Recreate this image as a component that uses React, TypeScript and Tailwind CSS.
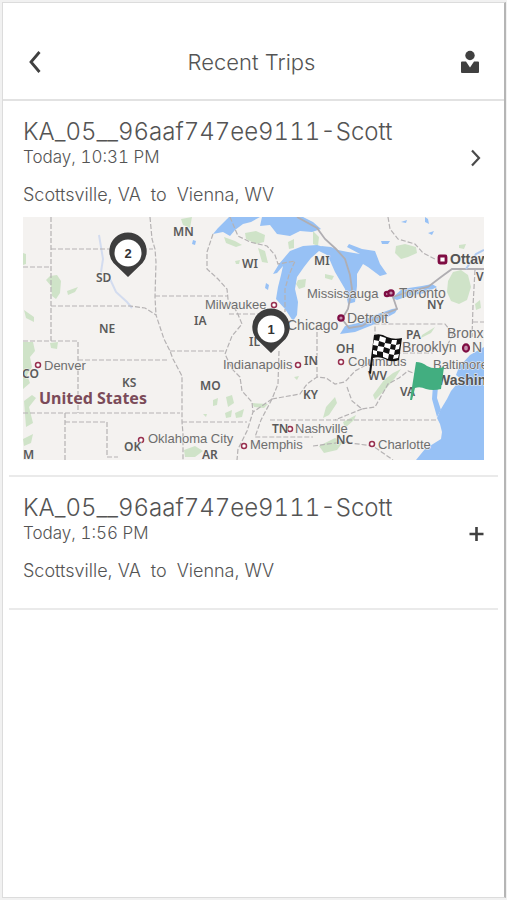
import { useState } from 'react';

type Trip = {
  id: number;
  name: string;
  time: string;
  from: string;
  to: string;
};

const trips: Trip[] = [
  { id: 1, name: 'KA_05__96aaf747ee9111-Scott', time: 'Today, 10:31 PM', from: 'Scottsville, VA', to: 'Vienna, WV' },
  { id: 2, name: 'KA_05__96aaf747ee9111-Scott', time: 'Today, 1:56 PM', from: 'Scottsville, VA', to: 'Vienna, WV' },
];

const stateLabels = [
  { text: 'MN', x: 150, y: 19 },
  { text: 'SD', x: 73, y: 65 },
  { text: 'WI', x: 219, y: 51 },
  { text: 'MI', x: 291, y: 48 },
  { text: 'NE', x: 76, y: 116 },
  { text: 'IA', x: 171, y: 108 },
  { text: 'IL', x: 226, y: 129 },
  { text: 'IN', x: 281, y: 148 },
  { text: 'OH', x: 313, y: 136 },
  { text: 'PA', x: 383, y: 122 },
  { text: 'NY', x: 404, y: 92 },
  { text: 'V', x: 453, y: 64 },
  { text: 'CO', x: -1, y: 161 },
  { text: 'KS', x: 99, y: 170 },
  { text: 'MO', x: 177, y: 173 },
  { text: 'KY', x: 280, y: 182 },
  { text: 'WV', x: 345, y: 163 },
  { text: 'VA', x: 377, y: 179 },
  { text: 'OK', x: 101, y: 234 },
  { text: 'AR', x: 179, y: 242 },
  { text: 'TN', x: 249, y: 216 },
  { text: 'NC', x: 313, y: 227 },
  { text: 'M', x: 0, y: 242 },
];

const cityLabels = [
  { text: 'Milwaukee', x: 182, y: 92, size: 13 },
  { text: 'Mississauga', x: 284, y: 81, size: 13 },
  { text: 'Toronto', x: 376, y: 81, size: 14 },
  { text: 'Chicago', x: 264, y: 113, size: 14 },
  { text: 'Detroit', x: 324, y: 106, size: 14 },
  { text: 'Brooklyn', x: 379, y: 135, size: 14 },
  { text: 'Bronx', x: 424, y: 121, size: 14 },
  { text: 'N', x: 449, y: 135, size: 14 },
  { text: 'Denver', x: 21, y: 153, size: 13 },
  { text: 'Indianapolis', x: 200, y: 152, size: 13 },
  { text: 'Columbus', x: 325, y: 149, size: 13 },
  { text: 'Baltimore', x: 410, y: 152, size: 13 },
  { text: 'Oklahoma City', x: 125, y: 226, size: 13 },
  { text: 'Memphis', x: 227, y: 232, size: 13 },
  { text: 'Nashville', x: 272, y: 216, size: 13 },
  { text: 'Charlotte', x: 355, y: 232, size: 13 },
];

const cityDots = [
  [251, 88],
  [15, 148],
  [275, 148],
  [318, 145],
  [118, 223],
  [221, 229],
  [267, 212],
  [349, 227],
];

const borders = [
  'M28 0V124 M0 124H55V196 M55 143H146 M0 50H28 M28 32H130',
  'M28 89H107L122 91L133 98L141 122L147 134L150 142L159 159V205L160 217V243',
  'M127 0L129 22L132 32L133 45L132 80L133 98 M132 79H204 M206 97H237',
  'M190 17L184 35L184 52L195 62L204 72L205 82L214 95L219 107L209 119L202 137L209 152L217 160L219 174L229 185L230 195L224 214L215 232L214 243',
  'M207 0L215 19L227 25L244 29L252 38L255 47L272 44L266 58L262 72V95',
  'M147 134H202 M0 196H157 M159 205H224 M247 203H414 M42 196V243 M42 205H84V240H95',
  'M256 134L255 167L249 182L230 195 M249 182L260 180L277 177L284 167L294 160L303 161L312 167L322 165L332 154L345 147L352 136V107H422L430 117L424 129',
  'M294 108V160 M324 170L329 184L339 192L352 190L365 167L376 161L385 154L400 160L412 172 M339 192L312 203 M249 182L238 203L232 220H290',
  'M365 0L367 12L375 22L392 27L400 36L412 42 M452 53L450 89L449 120 M450 105H461 M290 229L320 225L350 229L370 243 M352 136H410',
];

const lakes = [
  'M206 0L195 11L190 17L200 15L207 19L212 13L220 7L228 5L237 0Z',
  'M239 0L237 9L247 8L254 17L267 19L277 14L289 15L298 12L290 5L280 0Z',
  'M250 57L256 47L267 34L280 29L294 28L304 31L312 37L306 39L296 34L288 41L281 50L274 60L272 72L275 85L274 98L270 104L262 92L253 82L255 70L258 58L260 49L254 56Z',
  'M298 29L308 30L315 33L325 35L337 37L324 30L326 27L339 32L352 34L357 47L364 57L357 59L345 50L340 47L334 57V69L332 85L325 87L322 72L312 55L305 39Z',
  'M322 109L335 106L352 98L369 92L375 91L372 96L352 107L332 115L317 117Z',
  'M369 81L379 72L399 69L409 67L414 70L402 76L385 79L374 83Z',
  'M461 130L447 138L436 150L433 158L438 162L428 174L424 182L418 192L414 201L417 207L419 215L418 222L402 232L393 243H461Z',
  'M410 168L409 182L414 200L418 193L414 181L415 170Z',
  'M243 66L246 68L245 73L242 71Z M170 23L173 24L172 28L169 27Z M358 24L367 24L365 27L359 27Z M402 0L405 2L406 7L402 5Z M378 5L384 3L383 6Z M405 16L411 14L409 18Z',
];

const woods = [
  'M27 59L34 58L38 64L37 76L33 82L29 79L28 69L23 63Z',
  'M430 55L438 53L445 58L448 70L444 83L436 87L428 84L424 75L425 64Z',
  'M373 29L382 27L393 30L394 36L385 40L378 42L372 36Z',
  'M222 16L233 14L242 18L241 25L233 27L223 22Z',
  'M235 31L242 34L245 46L239 45Z M212 44L217 43L216 47L213 47Z',
  'M201 20L212 24L219 28L213 30L203 26Z M158 2L169 0L167 11L160 8Z',
  'M290 14L296 20L295 29L290 27Z M265 25L271 22L271 31L266 32Z',
  'M275 63L283 62L282 70L276 72L273 67Z M302 57L311 59L309 63L302 61Z',
  'M0 125H10L12 134L7 140L9 150L4 158L7 166L0 172Z M27 126L35 125L34 132L28 131Z',
  'M0 36L3 37V47L0 48Z M1 93L11 100V105L3 101Z M44 74L55 70L52 75L45 78Z',
  'M1 184L9 178L13 181L6 190L10 206L3 210Z M0 222L10 217L8 226L1 229Z',
  'M203 180L209 178L211 186L205 190Z M190 183L195 181L194 188L190 189Z M202 196L209 193L208 200L203 201Z M212 196L221 192L219 200L213 201Z M180 197L184 197L183 200Z',
  'M161 233L172 229L180 234L172 240L162 240Z M229 186L245 187L241 191L231 190Z',
  'M361 163L370 156L378 152L372 161L362 173L352 183L350 178Z',
  'M303 190L312 180L314 186L306 198L300 201Z M296 229L312 221L320 225L314 233L301 236Z M320 205L333 198L331 203L322 211Z',
  'M399 118L412 110L408 116L398 121Z M436 28L443 27L441 32L436 31Z M452 87L457 83L458 91L453 93Z M271 160L276 159L274 163Z',
];

const BackIcon = () => (
  <svg viewBox="0 0 16 24" className="h-6 w-4" fill="none" stroke="#404040" strokeWidth="2.800">
    <path d="M12.500 2L4 12L12.500 22" />
  </svg>
);

const ProfileIcon = () => (
  <svg viewBox="0 0 20 24" className="h-6 w-5" fill="#404040">
    <circle cx="10" cy="5.500" r="4.700" />
    <path d="M2 11.500H6L10 17.500L14 11.500H18Q19 11.500 19 12.500V22Q19 23 18 23H2Q1 23 1 22V12.500Q1 11.500 2 11.500Z" />
  </svg>
);

const ChevronIcon = () => (
  <svg viewBox="0 0 16 18" className="h-[18px] w-4" fill="none" stroke="#4a4a4a" strokeWidth="2.200">
    <path d="M4 1.500L11 9L4 16.500" />
  </svg>
);

const PlusIcon = () => (
  <svg viewBox="0 0 16 18" className="h-[18px] w-4" fill="none" stroke="#404040" strokeWidth="2.600">
    <path d="M1.500 9H15.500M8.500 2V16" />
  </svg>
);

const Pin = ({ x, y, label }: { x: number; y: number; label: string }) => (
  <g transform={`translate(${x} ${y})`}>
    <path d="M0 24L-14.500 10A18.700 18.700 0 1 1 14.500 10Z" fill="#3d3d3d" />
    <circle r="13.500" fill="#fff" />
    <text y="5" textAnchor="middle" fontSize="13" fontWeight="700" fill="#333">
      {label}
    </text>
  </g>
);

const TripMap = () => (
  <svg
    viewBox="0 0 461 243"
    role="img"
    aria-label="Trip map"
    className="block w-full bg-[#f4f2f0] font-['Liberation_Sans',Arial,sans-serif]"
  >
    <g fill="#cfe3c8">
      {woods.map((d) => <path key={d} d={d} />)}
    </g>
    <g fill="#97c1f5">
      {lakes.map((d) => <path key={d} d={d} />)}
    </g>
    <path d="M76 18L78 30L80 42L78 55 M87 62L93 75L104 85L109 91" fill="none" stroke="#d3dcef" strokeWidth="2" />
    <g fill="none" stroke="#b5b2b3" strokeWidth="1.200" strokeDasharray="5 2">
      {borders.map((d) => <path key={d} d={d} />)}
    </g>
    <path
      d="M274 0L294 11L302 22L313 32L322 42L327 58L329 72L325 92L319 102L326 111L339 109L356 99L374 92L370 80L388 74L405 70L418 60L429 52H461"
      fill="none"
      stroke="#b0aeb2"
      strokeWidth="1.800"
    />
    <path d="M443 52L453 37L461 33" fill="none" stroke="#afcaf0" strokeWidth="2" />

    {/* City markers */}
    <g fill="#fff" stroke="#98304f" strokeWidth="1.500">
      {cityDots.map(([cx, cy]) => <circle key={`${cx}-${cy}`} cx={cx} cy={cy} r="2.500" />)}
    </g>
    <g fill="#c490ac" stroke="#7f0d43" strokeWidth="2.200">
      <circle cx="318" cy="101" r="2.700" />
      <circle cx="364" cy="77" r="2.200" />
      <circle cx="368" cy="76" r="2.700" />
      <ellipse cx="443" cy="131" rx="3" ry="3.600" />
      <rect x="416" y="39" width="7" height="7" rx="1" fill="#fff" strokeWidth="2.800" />
    </g>

    {/* Labels */}
    <g fill="#6e6e6e" stroke="#f4f2f0" strokeWidth="1" paintOrder="stroke">
      {cityLabels.map((l) => <text key={l.text} x={l.x} y={l.y} fontSize={l.size}>{l.text}</text>)}
    </g>
    <g
      className="font-['Noto_Sans',sans-serif]"
      fontSize="12"
      fontWeight="600"
      fill="#5a5a5a"
      stroke="#f4f2f0"
      strokeWidth="1"
      paintOrder="stroke"
    >
      {stateLabels.map((l) => <text key={l.text} x={l.x} y={l.y}>{l.text}</text>)}
    </g>
    <g fontSize="14" fontWeight="700" fill="#555" stroke="#f4f2f0" strokeWidth="1" paintOrder="stroke">
      <text x="427" y="47">Ottawa</text>
      <text x="414" y="168">Washington</text>
    </g>
    <text
      x="16"
      y="187"
      className="font-['Noto_Sans',sans-serif]"
      fontSize="16"
      fontWeight="700"
      fill="#7b4b59"
      stroke="#f4f2f0"
      strokeWidth="1"
      paintOrder="stroke"
    >
      United States
    </text>

    <Pin x={105} y={36} label="2" />
    <Pin x={248} y={112} label="1" />

    {/* Finish flag */}
    <path d="M351 118Q358 116 364 120Q371 123 379 121L376 143Q369 146 362 142Q356 139 350 141L348 157L346 156Z" fill="#111" />
    <g fill="#fff">
      <path d="M357 119L363 121L362 126L356 124Z M369 123L374 123L373 128L368 127Z" />
      <path d="M351 123L356 124L355 129L350 128Z M362 126L368 127L367 132L361 130Z M373 128L377 127L376 132L372 133Z" />
      <path d="M355 129L361 130L360 135L354 134Z M367 132L372 133L371 138L366 137Z" />
      <path d="M350 133L354 134L354 138L350 137Z M360 135L366 137L365 142L360 140Z M371 138L376 137L375 141L370 142Z" />
    </g>

    {/* Start flag */}
    <path d="M393 145Q399 145 404 149Q411 153 421 150L418 172Q410 174 403 172Q397 169 392 171L389 183H387Z" fill="#42ae80" />
  </svg>
);

const TripCard = ({ trip, open, onToggle }: { trip: Trip; open: boolean; onToggle: () => void }) => (
  <li className="border-b-2 border-[#eaeaea] px-[14px] pt-4 pb-[15px]">
    <div className="flex items-end justify-between">
      <div className="tabular-nums">
        <h2 className="text-2xl leading-[30px] font-light">{trip.name}</h2>
        <p className="text-[17px] leading-5 font-light">{trip.time}</p>
      </div>
      <button
        onClick={onToggle}
        aria-expanded={open}
        aria-label={open ? 'Collapse trip' : 'Expand trip'}
        className="cursor-pointer"
      >
        {open ? <ChevronIcon /> : <PlusIcon />}
      </button>
    </div>
    <p className="mt-[18px] mb-3 flex gap-2.5 text-lg leading-5 font-light">
      <span>{trip.from}</span>
      <span>to</span>
      <span>{trip.to}</span>
    </p>
    {open && <TripMap />}
  </li>
);

export default function App() {
  const [openId, setOpenId] = useState<number | null>(1);

  return (
    <div className="flex min-h-screen flex-col bg-[#f1f1f1] pt-0.5 pr-px pb-0.5 pl-0.5 font-['Inter','Liberation_Sans',sans-serif] text-[#545454]">
      <div className="flex-1 border border-r-2 border-[#dcdcdc] border-r-[#b5b5b5] bg-white">
        <header className="flex items-center justify-between border-b-2 border-[#e2e2e2] px-6 pt-[47px] pb-[25px]">
          <button aria-label="Back" className="cursor-pointer">
            <BackIcon />
          </button>
          <h1 className="text-[22px] leading-6 font-light">Recent Trips</h1>
          <button aria-label="Profile" className="cursor-pointer">
            <ProfileIcon />
          </button>
        </header>
        <ul className="px-[6px]">
          {trips.map((trip) => (
            <TripCard
              key={trip.id}
              trip={trip}
              open={openId === trip.id}
              onToggle={() => setOpenId(openId === trip.id ? null : trip.id)}
            />
          ))}
        </ul>
      </div>
    </div>
  );
}
